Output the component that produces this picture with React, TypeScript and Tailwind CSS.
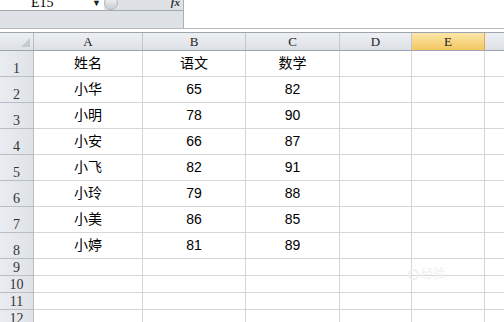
import React from "react";

const cols = [
  { key: "A", w: "w-[109px]" },
  { key: "B", w: "w-[103px]" },
  { key: "C", w: "w-[94px]" },
  { key: "D", w: "w-[72px]" },
  { key: "E", w: "w-[73px]" },
];

const rows: string[][] = [
  ["姓名", "语文", "数学"],
  ["小华", "65", "82"],
  ["小明", "78", "90"],
  ["小安", "66", "87"],
  ["小飞", "82", "91"],
  ["小玲", "79", "88"],
  ["小美", "86", "85"],
  ["小婷", "81", "89"],
];

const serif = "font-['Liberation_Serif','DejaVu_Serif',serif]";
const cjk = "font-['Liberation_Sans','Noto_Sans_CJK_SC',sans-serif]";

function Row({ n, cells, tall }: { n: number; cells: string[]; tall: boolean }) {
  const h = tall ? "h-[26px]" : "h-[17px]";
  return (
    <div className={`flex ${h}`}>
      <div
        className={`w-[34px] shrink-0 flex items-end justify-center border-r border-b border-[#b9bec6] bg-gradient-to-r from-[#e9ecf0] to-[#dfe3e8] text-[14px] leading-[14px] text-[#333] ${serif}`}
      >
        {n}
      </div>
      {cols.map((c, i) => (
        <div
          key={c.key}
          className={`${c.w} shrink-0 flex items-center justify-center border-r border-b border-[#d6d6d6] text-[14px] text-black ${cjk}`}
        >
          {cells[i] ?? ""}
        </div>
      ))}
      <div className="flex-1 border-b border-[#d6d6d6]" />
    </div>
  );
}

export default function App() {
  return (
    <div className="w-[504px] h-[322px] overflow-hidden bg-white relative">
      {/* formula bar strip */}
      <div className="flex h-[29px] border-b border-[#b4bac2]">
        <div className="w-[184px] shrink-0 flex flex-col bg-[#dee2e7] border-r border-[#aab0b8]">
          <div className="flex h-[11px] border-b border-[#a3a9b1]">
            <div className="w-[104px] bg-white relative overflow-hidden">
              <span className={`absolute left-[31px] top-[-4px] text-[14px] leading-[14px] text-black ${serif}`}>E15</span>
              <span className="absolute left-[92px] top-[-2px] text-[9px] leading-[9px] text-[#222]">▼</span>
            </div>
            <div className="w-[14px] h-[14px] -mt-[4px] rounded-full bg-gradient-to-b from-[#f4f6f8] to-[#c9ced5] border border-[#b0b6be]" />
            <div className="flex-1 relative overflow-hidden">
              <span className={`absolute right-[3px] top-[-3px] italic text-[11px] leading-[11px] font-bold text-[#333] ${serif}`}>fx</span>
            </div>
          </div>
          <div className="flex-1" />
        </div>
        <div className="flex-1 bg-white" />
      </div>
      <div className="h-[3px]" />
      {/* column headers */}
      <div className="flex h-[19px] border-t border-b border-[#9ea4ac]">
        <div className="w-[34px] shrink-0 border-r border-[#b9bec6] bg-gradient-to-b from-[#edf0f3] to-[#dde1e6] relative">
          <div className="absolute right-[3px] bottom-[3px] w-0 h-0 border-l-[9px] border-l-transparent border-b-[9px] border-b-[#c5cad0]" />
        </div>
        {cols.map((c) => (
          <div
            key={c.key}
            className={`${c.w} shrink-0 flex items-end justify-center pb-[1px] border-r text-[13px] leading-[14px] ${serif} ${
              c.key === "E"
                ? "bg-gradient-to-b from-[#fbe6a8] to-[#f3c85e] border-[#e6a94a] text-[#222]"
                : "bg-gradient-to-b from-[#edf0f3] to-[#dde1e6] border-[#c2c7cd] text-[#222]"
            }`}
          >
            {c.key}
          </div>
        ))}
        <div className="flex-1 bg-gradient-to-b from-[#edf0f3] to-[#dde1e6]" />
      </div>
      {rows.map((r, i) => (
        <Row key={i} n={i + 1} cells={r} tall />
      ))}
      {[9, 10, 11, 12].map((n) => (
        <Row key={n} n={n} cells={[]} tall={false} />
      ))}
      {/* faint watermark */}
      <div className="absolute left-[408px] top-[268px] flex items-center gap-[2px] pointer-events-none">
        <div className="w-[11px] h-[11px] rounded-full border-2 border-[#efefef]" />
        <span className={`text-[12px] leading-[12px] text-[#efefef] ${cjk}`}>经验</span>
      </div>
    </div>
  );
}
